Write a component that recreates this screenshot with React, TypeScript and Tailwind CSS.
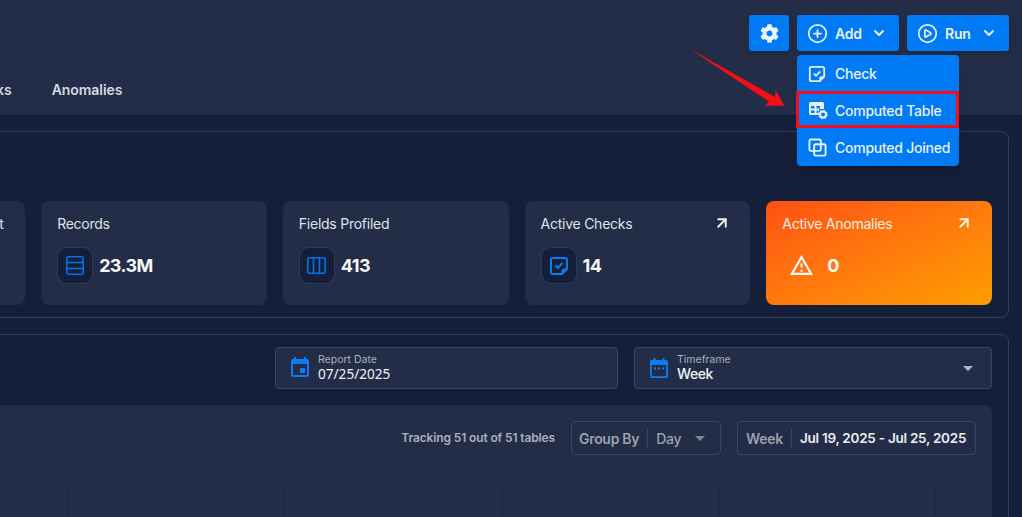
import React from "react";
import { ChevronDown, CirclePlus, CirclePlay, ArrowUpRight } from "lucide-react";
import { FaCog } from "react-icons/fa";
import { MdEvent, MdOutlineWarningAmber, MdArrowDropDown } from "react-icons/md";

const CheckNote = ({ className }: { className: string }) => (
  <svg viewBox="0 0 20 20" fill="none" stroke="currentColor" strokeWidth="2" className={className}>
    <path d="M4 2h12a2 2 0 0 1 2 2v9l-5 5H4a2 2 0 0 1-2-2V4a2 2 0 0 1 2-2z" strokeLinejoin="round" />
    <path d="M18 13h-3.500a1.500 1.500 0 0 0-1.500 1.500V18z" fill="currentColor" strokeWidth="1" />
    <path d="M6.500 9.500l2.500 2.500 4.500-5" />
  </svg>
);

const TableGear = ({ className }: { className: string }) => (
  <svg viewBox="0 0 20 20" className={className} fill="none">
    <path d="M2.500 2h12A1.500 1.500 0 0 1 16 3.500V9h-5v6H2.500A1.500 1.500 0 0 1 1 13.500v-10A1.500 1.500 0 0 1 2.500 2z" fill="currentColor" />
    <rect x="3" y="6" width="3.500" height="2.500" fill="#007bf5" />
    <rect x="8.500" y="6" width="3.500" height="2.500" fill="#007bf5" />
    <rect x="3" y="10.500" width="3.500" height="2.500" fill="#007bf5" />
    <rect x="8.500" y="10.500" width="2" height="2.500" fill="#007bf5" />
    <circle cx="15" cy="14.500" r="3" stroke="currentColor" strokeWidth="2" />
    <circle cx="15" cy="14.500" r="4.200" stroke="currentColor" strokeWidth="1.200" strokeDasharray="1.500 1.800" />
  </svg>
);

const Overlap = ({ className }: { className: string }) => (
  <svg viewBox="0 0 20 20" fill="none" stroke="currentColor" strokeWidth="2" className={className}>
    <rect x="1.500" y="1.500" width="12" height="12" rx="1.500" />
    <rect x="6.500" y="6.500" width="12" height="12" rx="1.500" />
  </svg>
);

const CalendarDots = ({ className }: { className: string }) => (
  <svg viewBox="0 0 20 20" className={className} fill="none">
    <path d="M4.500 0h2v2h7V0h2v2H17a2 2 0 0 1 2 2v14a2 2 0 0 1-2 2H3a2 2 0 0 1-2-2V4a2 2 0 0 1 2-2h1.500z" fill="currentColor" />
    <rect x="2.800" y="7" width="14.400" height="11.200" fill="#232d47" />
    <rect x="5" y="9.500" width="2" height="2" fill="currentColor" />
    <rect x="9" y="9.500" width="2" height="2" fill="currentColor" />
    <rect x="13" y="9.500" width="2" height="2" fill="currentColor" />
  </svg>
);

const Rows = ({ className }: { className: string }) => (
  <svg viewBox="0 0 18 19" fill="none" stroke="currentColor" strokeWidth="1.600" className={className}>
    <rect x="0.800" y="0.800" width="16.400" height="17.400" rx="2" />
    <path d="M1 6.500h16M1 12.500h16" />
  </svg>
);

const Cols = ({ className }: { className: string }) => (
  <svg viewBox="0 0 19 17" fill="none" stroke="currentColor" strokeWidth="1.600" className={className}>
    <rect x="0.800" y="0.800" width="17.400" height="15.400" rx="1.500" />
    <path d="M6.500 1v15M12.500 1v15" />
  </svg>
);

function HeaderButton({ icon, label }: { icon: React.ReactNode; label: string }) {
  return (
    <button className="flex h-9 w-[102px] items-center rounded-[3px] bg-[#007bf5] pl-[10px] text-[14px] font-semibold tracking-[-0.2px] text-[#e8f1fc] shadow-md">
      {icon}
      <span className="ml-[7px]">{label}</span>
      <ChevronDown className="ml-auto mr-[12px] size-[16px]" strokeWidth={3} />
    </button>
  );
}

function MenuItem({ icon, label, className }: { icon: React.ReactNode; label: string; className: string }) {
  return (
    <div className={"-ml-px flex items-center text-[14px] font-medium text-[#e8f1fc] " + className}>
      {icon}
      <span className="whitespace-nowrap tracking-[-0.25px]">{label}</span>
    </div>
  );
}

function StatCard({
  title,
  value,
  icon,
  arrow,
  titleClass,
}: {
  title: string;
  value: string;
  icon: React.ReactNode;
  arrow?: boolean;
  titleClass?: string;
}) {
  return (
    <div className="h-[104px] rounded-[8px] bg-[#232d47] px-4 pt-[12px]">
      <div className="flex h-[20px] items-center justify-between">
        <span className={"whitespace-nowrap text-[14px] tracking-[-0.25px] text-[#dfe3ea] " + (titleClass ?? "")}>{title}</span>
        {arrow && <ArrowUpRight className="mr-[3px] size-[18px] text-[#eef1f5]" strokeWidth={2.5} />}
      </div>
      <div className="mt-[14px] flex items-center gap-[6px]">
        <div className="flex h-[37px] w-[36px] items-center justify-center rounded-[10px] border border-[#2f3a57] bg-[#151f3a] text-[#0073ea]">
          {icon}
        </div>
        <span className="text-[18px] font-bold tracking-[-0.6px] text-[#f5f7fa]">{value}</span>
      </div>
    </div>
  );
}

function FieldBox({
  label,
  value,
  icon,
  className,
  caret,
  valueClass,
}: {
  label: string;
  value: string;
  icon: React.ReactNode;
  className: string;
  caret?: boolean;
  valueClass: string;
}) {
  return (
    <div className={"flex h-[42px] items-center rounded-[4px] border border-[#3b4560] bg-[#232d47] pr-[11px] " + className}>
      {icon}
      <div className="flex flex-col gap-px">
        <span className="text-[10.5px] leading-[11px] text-[#aab0bd]">{label}</span>
        <span className={"leading-[16px] text-[#f0f2f5] " + valueClass}>{value}</span>
      </div>
      {caret && <MdArrowDropDown className="ml-auto size-[24px] text-[#b4bac5]" />}
    </div>
  );
}

export default function App() {
  const gridCells = [0, 1, 2, 3];
  return (
    <div className="relative h-[517px] w-[1022px] overflow-hidden bg-[#151f3a] font-['Inter',sans-serif]">
      <header className="h-[115px] bg-[#232d47] pt-[15px]">
        <div className="flex justify-end gap-2 pr-[13px]">
          <button className="flex h-9 w-10 items-center justify-center rounded-[3px] bg-[#007bf5] text-[#eef5fd] shadow-md">
            <FaCog className="size-[19px]" />
          </button>
          <HeaderButton icon={<CirclePlus className="size-[21px]" strokeWidth={2} />} label="Add" />
          <HeaderButton icon={<CirclePlay className="size-[21px]" strokeWidth={2} />} label="Run" />
        </div>
        <nav className="ml-[-39px] mt-[28px] flex gap-10 text-[14px] font-semibold tracking-[-0.05px] text-[#d5d9e0]">
          <span>Checks</span>
          <span>Anomalies</span>
        </nav>
      </header>

      <main className="ml-[-217.6px] w-[1226.6px] pt-4">
        <section className="rounded-[8px] border border-[#333e5a] px-4 pb-3 pt-[69px]">
          <div className="grid grid-cols-5 gap-4">
            <StatCard title="Volumetric Measurement" titleClass="ml-[28px]" value="" icon={null} />
            <StatCard title="Records" value="23.3M" icon={<Rows className="h-[19px] w-[18px]" />} />
            <StatCard title="Fields Profiled" value="413" icon={<Cols className="h-[17px] w-[19px]" />} />
            <StatCard title="Active Checks" value="14" arrow icon={<CheckNote className="size-[20px] text-[#0a7df5]" />} />
            <div className="h-[104px] rounded-[8px] bg-gradient-to-br from-[#ff4f13] to-[#ff9d00] px-4 pt-[12px]">
              <div className="flex h-[20px] items-center justify-between">
                <span className="text-[14px] tracking-[-0.25px] text-[#fff0e6]">Active Anomalies</span>
                <ArrowUpRight className="mr-[3px] size-[18px] text-[#fff3e8]" strokeWidth={2.5} />
              </div>
              <div className="ml-[7px] mt-[14px] flex h-[37px] items-center gap-[13px]">
                <MdOutlineWarningAmber className="size-[25px] text-white" />
                <span className="text-[18px] font-bold text-white">0</span>
              </div>
            </div>
          </div>
        </section>

        <section className="mt-4 h-[220px] rounded-[8px] border border-[#333e5a] px-4 pt-3">
          <div className="flex justify-end gap-4">
            <FieldBox
              label="Report Date"
              value="07/25/2025"
              valueClass="font-['Noto_Sans',sans-serif] text-[13.6px]"
              className="w-[343px] pl-[12px]"
              icon={<MdEvent className="mr-[6px] size-[24px] text-[#0a7df5]" />}
            />
            <FieldBox
              label="Timeframe"
              value="Week"
              valueClass="text-[14px] font-medium tracking-[-0.45px]"
              className="w-[358px] pl-[14px]"
              caret
              icon={<CalendarDots className="mr-[8px] size-[20px] text-[#0a7df5]" />}
            />
          </div>
          <div className="mt-4 h-[200px] rounded-t-[8px] bg-[#232d47] pr-4 pt-4">
            <div className="flex items-center justify-end">
              <span className="mr-4 text-[12px] font-semibold tracking-[-0.13px] text-[#a9afbb]">
                Tracking 51 out of 51 tables
              </span>
              <div className="flex h-[34px] w-[150px] items-center rounded-[4px] border border-[#3b4560] pl-[7px] text-[14px] font-semibold tracking-[-0.3px] text-[#9aa1ae]">
                <span>Group By</span>
                <span className="mx-2 h-5 w-px bg-[#3b4560]" />
                <span className="font-medium">Day</span>
                <MdArrowDropDown className="ml-auto mr-[8px] size-[24px] text-[#7f8797]" />
              </div>
              <div className="ml-4 flex h-[34px] w-[239px] items-center rounded-[4px] border border-[#3b4560] pl-2 text-[14px] font-semibold tracking-[-0.3px] text-[#9aa1ae]">
                <span>Week</span>
                <span className="ml-2 mr-2 h-5 w-px bg-[#3b4560]" />
                <span className="whitespace-nowrap text-[13.5px] tracking-[-0.25px] text-[#eceef2]">Jul 19, 2025 - Jul 25, 2025</span>
              </div>
            </div>
            <div className="mt-8 flex h-8 justify-end pr-10">
              {gridCells.map((c) => (
                <div key={c} className="h-full w-[217.25px] border-l border-[#1d2740] last:border-r" />
              ))}
            </div>
          </div>
        </section>
      </main>

      <div className="absolute left-[797px] top-[55px] w-[162px] rounded-[4px] bg-[#007bf5] shadow-lg">
        <MenuItem className="h-[36px] pl-[12px] pt-px" icon={<CheckNote className="mr-[9px] size-[18px]" />} label="Check" />
        <MenuItem
          className="h-[37px] border-[3px] border-[#f60d17] pl-[9px] pt-px"
          icon={<TableGear className="mr-[7px] size-[20px]" />}
          label="Computed Table"
        />
        <MenuItem className="h-[38px] pl-[12px] pt-px" icon={<Overlap className="mr-[8px] size-[19px]" />} label="Computed Joined" />
      </div>

      <svg className="absolute left-[685px] top-[45px] h-[65px] w-[105px]" viewBox="0 0 105 65">
        <path d="M5 4 L90 52 L90.700 45 L99.300 60.700 L80 60.700 L84 56.500 Z" fill="#f60d17" />
      </svg>
    </div>
  );
}
